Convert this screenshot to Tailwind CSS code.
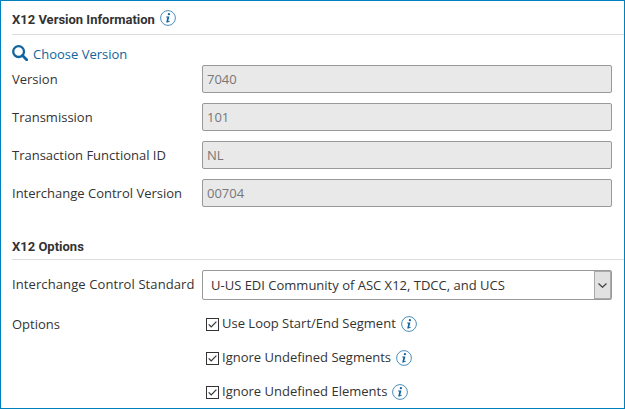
<!DOCTYPE html>
<html lang="en">
<head>
<meta charset="utf-8">
<title>X12 Version Information</title>
<script src="https://cdn.jsdelivr.net/npm/@tailwindcss/browser@4"></script>
</head>
<body class="bg-white">
<svg class="hidden">
  <symbol id="info" viewBox="0 0 16 16">
    <circle cx="8" cy="8" r="7.4" fill="#fff" stroke="#4a8fbb" stroke-width="1"/>
    <circle cx="8.9" cy="4.2" r="1.15" fill="#12649c"/>
    <path d="M6.2 6.6H9.4L8.2 11.2L9.8 10.7V11.4L7.6 12.4H6.2L7.3 7.4H6.2Z" fill="#12649c"/>
  </symbol>
  <symbol id="check" viewBox="0 0 13 13">
    <rect x=".5" y=".5" width="12" height="12" fill="#fff" stroke="#333"/>
    <path d="M2.7 6.4L5.2 9L10.4 3.6" fill="none" stroke="#333" stroke-width="1.2"/>
  </symbol>
</svg>
<main class="flex h-[409px] w-[625px] flex-col overflow-hidden border border-[#0080bd] bg-white pl-[11px] font-['Open_Sans',sans-serif] text-[13px] leading-[18px] text-[#333]">
  <h2 class="flex h-[34px] shrink-0 items-center gap-[5px] border-b border-[#ddd] pt-[4px] font-[Roboto,sans-serif] text-[13px] font-bold"><span>X12 Version Information</span><svg class="mb-[3px] size-4"><use href="#info"/></svg></h2>
  <a class="flex h-[30px] shrink-0 items-center gap-[5px] pt-2 text-[#12649c]">
    <svg class="mb-[2px] size-4" viewBox="0 0 16 16" fill="none" stroke="#12649c"><circle cx="6.6" cy="6.6" r="5.4" stroke-width="2.3"/><path d="M10.5 10.5L14.7 14.7" stroke-width="2.8" stroke-linecap="round"/></svg>
    <span>Choose Version</span>
  </a>
  <div class="flex shrink-0 flex-col gap-[10px]">
    <label class="flex h-7 items-center"><span class="w-[190px]">Version</span><span class="flex h-7 w-[410px] items-center rounded-xs border border-[#999] bg-[#e9e9e9] px-1 text-[#777]">7040</span></label>
    <label class="flex h-7 items-center"><span class="w-[190px]">Transmission</span><span class="flex h-7 w-[410px] items-center rounded-xs border border-[#999] bg-[#e9e9e9] px-1 text-[#777]">101</span></label>
    <label class="flex h-7 items-center"><span class="w-[190px]">Transaction Functional ID</span><span class="flex h-7 w-[410px] items-center rounded-xs border border-[#999] bg-[#e9e9e9] px-1 text-[#777]">NL</span></label>
    <label class="flex h-7 items-center"><span class="w-[190px]">Interchange Control Version</span><span class="flex h-7 w-[410px] items-center rounded-xs border border-[#999] bg-[#e9e9e9] px-1 text-[#777]">00704</span></label>
  </div>
  <h2 class="mt-[26px] flex h-[27px] shrink-0 items-center border-b border-[#ddd] pt-[2px] font-[Roboto,sans-serif] text-[13px] font-bold">X12 Options</h2>
  <div class="mt-[10px] flex h-[30px] shrink-0 items-center">
    <span class="w-[190px] pb-[2px] whitespace-nowrap"><span class="tracking-[0.1px]">Interchange Control Standard</span></span>
    <div class="flex h-[30px] w-[410px] items-center justify-between rounded-xs border border-[#999] bg-white pl-2"><span>U-US EDI Community of ASC X12, TDCC, and UCS</span>
      <span class="flex h-7 w-[17px] items-center justify-center border border-[#aaa] bg-[#e1e1e1]"><svg class="h-[5px] w-[9px]" viewBox="0 0 9 5" fill="none" stroke="#444" stroke-width="1.2"><path d="M.5 .5L4.5 4.3L8.5 .5"/></svg></span>
    </div>
  </div>
  <div class="mt-[15px] flex shrink-0">
    <span class="w-[194px]">Options</span>
    <div class="flex flex-col gap-4">
      <label class="flex h-[18px] items-center"><svg class="mt-px size-[13px]"><use href="#check"/></svg><span class="ml-[3px] pb-[2px]">Use Loop Start/End Segment</span><svg class="ml-[5px] size-4"><use href="#info"/></svg></label>
      <label class="flex h-[18px] items-center"><svg class="mt-px size-[13px]"><use href="#check"/></svg><span class="ml-[3px] pb-[2px]">Ignore Undefined Segments</span><svg class="ml-[5px] size-4"><use href="#info"/></svg></label>
      <label class="flex h-[18px] items-center"><svg class="mt-px size-[13px]"><use href="#check"/></svg><span class="ml-[3px] pb-[2px]">Ignore Undefined Elements</span><svg class="ml-[5px] size-4"><use href="#info"/></svg></label>
    </div>
  </div>
</main>
</body>
</html>
